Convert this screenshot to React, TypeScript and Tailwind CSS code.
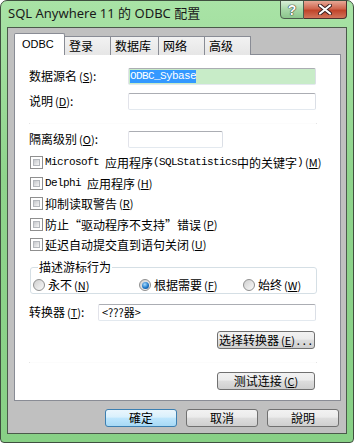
import React from "react";

const cjk = "font-['Noto_Sans_CJK_SC','Noto_Sans_CJK_JP',sans-serif]";
const mono = "font-['Liberation_Mono','DejaVu_Sans_Mono',monospace] text-[11px] tracking-[-0.6px]";

const Key = ({ k }: { k: string }) => (
  <span className="text-[11px] ml-[2px]">
    (<span className="underline">{k}</span>)
  </span>
);

const TextBox = ({ className = "", children }: { className?: string; children?: React.ReactNode }) => (
  <div
    className={`h-[17px] rounded-[2px] border border-[#abadb3] border-l-[#e2e3ea] border-r-[#dbdfe6] border-b-[#e3e9ef] flex items-center ${className}`}
  >
    {children}
  </div>
);

const Check = () => (
  <span className="w-[13px] h-[13px] shrink-0 border border-[#8f8f8f] bg-white p-[2px] mr-[2px]">
    <span className="block w-full h-full bg-gradient-to-br from-[#c6c8cc] to-[#f6f6f6] border border-[#b5b8bd]"></span>
  </span>
);

const Radio = ({ on = false }: { on?: boolean }) => (
  <span className="w-[12px] h-[12px] shrink-0 rounded-full border border-[#8f8f8f] bg-gradient-to-br from-[#cfcfcf] to-[#fafafa] flex items-center justify-center mr-[3px]">
    {on && (
      <span className="w-[7px] h-[7px] rounded-full bg-[radial-gradient(circle_at_40%_35%,#a8dcff,#1f78c8_55%,#0b3f7a)]"></span>
    )}
  </span>
);

const Btn = ({ children, className = "", def = false }: { children: React.ReactNode; className?: string; def?: boolean }) => (
  <button
    className={`h-[18px] rounded-[3px] border text-[12px] leading-[16px] text-black ${cjk} ${
      def
        ? "border-[#3c7fb1] bg-[linear-gradient(#eaf6fd_0%,#d9f0fc_45%,#bee6fd_50%,#a7d9f5_100%)]"
        : "border-[#707070] bg-[linear-gradient(#f2f2f2_0%,#ebebeb_45%,#dddddd_50%,#cfcfcf_100%)]"
    } ${className}`}
  >
    {children}
  </button>
);

// faint etched line, only the ends really show
const Sep = ({ className = "" }: { className?: string }) => (
  <div className={`w-[288px] h-px flex justify-between bg-[#fcfcfc] ${className}`}>
    <span className="w-px h-px bg-[#e4e4e4]"></span>
    <span className="w-px h-px bg-[#e4e4e4]"></span>
  </div>
);

const tabs = ["登录", "数据库", "网络", "高级"];
const tabW = ["w-[46px]", "w-[48px]", "w-[46px]", "w-[46px]"];

export default function App() {
  return (
    <div className="w-[354px] h-[443px] bg-[linear-gradient(#a9e3a6,#8fd48c_40%,#88d086)] border border-[#3f4f3f] rounded-t-[7px] rounded-b-[4px] flex flex-col overflow-hidden">
      {/* title bar */}
      <div className="h-[26px] flex items-start">
        <div className="flex-1 pl-[7px] pt-[3px] text-[13px] text-[#1a1a1a] font-['Noto_Sans','Noto_Sans_CJK_SC',sans-serif]">
          SQL Anywhere 11 的 ODBC 配置
        </div>
        <div className="flex mr-[6px] -mt-px">
          <div className="w-[24px] h-[19px] rounded-bl-[4px] border border-[#4d5d4d] bg-[linear-gradient(#d8efd8,#a8d8a8_50%,#8cc68c)] flex items-center justify-center text-white font-bold text-[14px] leading-none [text-shadow:0_0_1px_#333,0_0_1px_#333,0_0_1px_#333] font-['Liberation_Sans',sans-serif]">
            ?
          </div>
          <div className="w-[43px] h-[19px] rounded-br-[4px] border border-l-0 border-[#4d3030] bg-[linear-gradient(#e8a896,#d0664e_45%,#c0442a_55%,#d2745a)] flex items-center justify-center">
            <svg width="14" height="11" viewBox="0 0 14 11">
              <path d="M2 1.5 L12 9.5 M12 1.5 L2 9.5" stroke="#3a2020" strokeWidth="4" strokeLinecap="round" />
              <path d="M2 1.5 L12 9.5 M12 1.5 L2 9.5" stroke="#ffffff" strokeWidth="2.2" strokeLinecap="round" />
            </svg>
          </div>
        </div>
      </div>

      {/* client area */}
      <div className={`mx-[6px] h-[407px] bg-[#c0c0c0] border border-[#4a5a4a] pl-[6px] pt-[5px] ${cjk} text-[12px] text-black`}>
        {/* tabs */}
        <div className="flex items-end h-[22px] relative z-10">
          <div className="w-[51px] h-[22px] bg-white border border-b-0 border-[#898c95] rounded-t-[2px] pl-[7px] pt-[2px] text-[11px] font-['Liberation_Sans',sans-serif]">
            ODBC
          </div>
          {tabs.map((t, i) => (
            <div
              key={t}
              className={`${tabW[i]} h-[19px] bg-[linear-gradient(#f2f2f2,#e6e6e6)] border border-b-0 border-l-0 border-[#898c95] pl-[4px] leading-[17px]`}
            >
              {t}
            </div>
          ))}
        </div>

        {/* panel */}
        <div className="w-[327px] h-[347px] -mt-px bg-white border border-[#898c95] flex flex-col pl-[14px]">
          <div className="flex items-center mt-[12px]">
            <div className="w-[99px]">
              数据源名<Key k="S" />:
            </div>
            <TextBox className="w-[188px] bg-[#c8ecc8] pl-[1px]">
              <span className={`${mono} bg-[#3399ff] text-white leading-[13px]`}>ODBC_Sybase</span>
            </TextBox>
          </div>
          <div className="flex items-center mt-[7px]">
            <div className="w-[99px]">
              说明<Key k="D" />:
            </div>
            <TextBox className="w-[188px] bg-white" />
          </div>
          <Sep className="mt-[13px]" />
          <div className="flex items-center mt-[6px]">
            <div className="w-[99px]">
              隔离级别<Key k="O" />:
            </div>
            <TextBox className="w-[95px] bg-white" />
          </div>

          <div className="flex items-center h-[13px] mt-[8px] pl-px">
            <Check />
            <span className={mono}>Microsoft&nbsp;</span>
            <span>应用程序</span>
            <span className={mono}>(SQLStatistics</span>
            <span>中的关键字</span>
            <span className={mono}>)</span>
            <Key k="M" />
          </div>
          <div className="flex items-center h-[13px] mt-[8px] pl-px">
            <Check />
            <span className={mono}>Delphi&nbsp;</span>
            <span>应用程序</span>
            <Key k="H" />
          </div>
          <div className="flex items-center h-[13px] mt-[7px] pl-px">
            <Check />
            <span>抑制读取警告</span>
            <Key k="R" />
          </div>
          <div className="flex items-center h-[13px] mt-[8px] pl-px">
            <Check />
            <span>防止“驱动程序不支持”错误</span>
            <Key k="P" />
          </div>
          <div className="flex items-center h-[13px] mt-[7px] pl-px">
            <Check />
            <span>延迟自动提交直到语句关闭</span>
            <Key k="U" />
          </div>

          <fieldset className="w-[287px] mt-[9px] ml-px border border-[#d5dfe5] rounded-[3px] px-[2px] pt-[5px] pb-[2px]">
            <legend className="px-[1px] ml-[5px] leading-[14px]">描述游标行为</legend>
            <div className="flex items-center h-[12px]">
              <div className="w-[106px] flex items-center">
                <Radio />
                <span>永不</span>
                <Key k="N" />
              </div>
              <div className="w-[104px] flex items-center">
                <Radio on />
                <span>根据需要</span>
                <Key k="F" />
              </div>
              <div className="flex items-center">
                <Radio />
                <span>始终</span>
                <Key k="W" />
              </div>
            </div>
          </fieldset>

          <div className="flex items-center mt-[9px]">
            <div className="w-[69px]">
              转换器<Key k="T" />:
            </div>
            <TextBox className="w-[218px] bg-white pl-[3px]">
              <span className="text-[11px] leading-[13px]">&lt;???器&gt;</span>
            </TextBox>
          </div>

          <Btn className="w-[98px] ml-[188px] mt-[10px]">
            选择转换器<Key k="E" />
            <span className={mono}>...</span>
          </Btn>
          <Sep className="mt-[13px]" />
          <Btn className="w-[98px] ml-[188px] mt-[9px]">
            测试连接<Key k="C" />
          </Btn>
        </div>

        {/* bottom buttons */}
        <div className="flex gap-[9px] pl-[91px] mt-[8px]">
          <Btn def className="w-[72px]">確定</Btn>
          <Btn className="w-[72px]">取消</Btn>
          <Btn className="w-[72px]">說明</Btn>
        </div>
      </div>
    </div>
  );
}
